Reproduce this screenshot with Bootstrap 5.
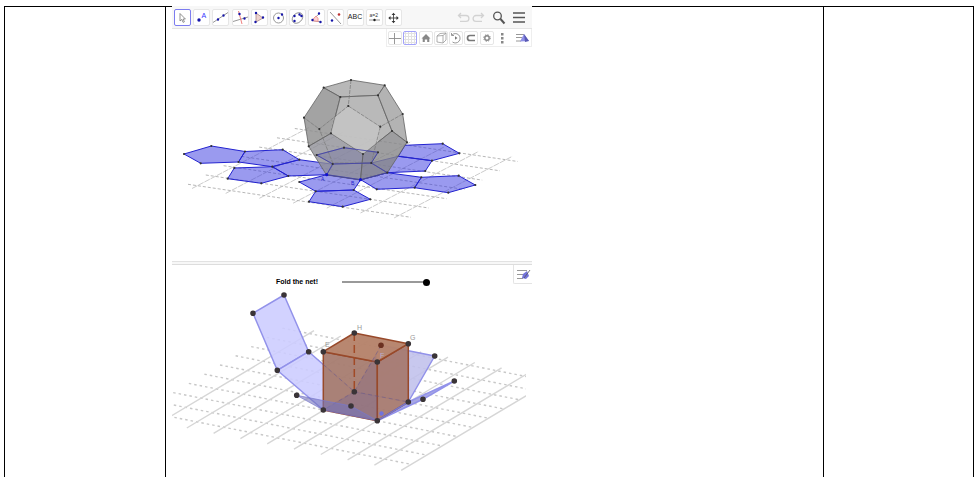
<!DOCTYPE html>
<html lang="en">
<head>
<meta charset="utf-8">
<meta name="viewport" content="width=device-width, initial-scale=1">
<title>Nets of solids</title>
<link href="https://cdn.jsdelivr.net/npm/bootstrap@5.3.0/dist/css/bootstrap.min.css" rel="stylesheet">
<style>
body{font-family:"Liberation Sans",Arial,sans-serif;background:#fff;color:#000}
.sheet{display:grid;grid-template-columns:160fr 658fr 150fr;margin:6px 3px 0 4px;min-height:calc(100vh - 6px);border:1px solid #000;border-width:1px 1px 0}
.sheet-cell{min-width:0}
.sheet-cell + .sheet-cell{border-left:1px solid #000}
.sheet-main{padding:0 6px}
.geo-app{max-width:360px;margin-top:-1px;background:#fff}
.geo-app svg{display:block}
.tool-bar{height:23px;background:#f7f7f7;border-bottom:1px solid #e4e4e4;padding:0 6px 0 2px}
.tool-set{flex:0 1 228px}
.tool-btn,.view-btn,.plain-btn{display:flex;align-items:center;justify-content:center;padding:0;border:1px solid #e6e6e6;border-radius:2px;background:#fff;color:#555}
.tool-btn{width:17px;height:17px}
.tool-btn.active{border-color:#7c7cf0}
.view-btn{width:14px;height:14px}
.view-btn.active{border-color:#a3a3fa}
.plain-btn{border:0;background:transparent}
.word{font-size:7px;line-height:8px;color:#222}
.view-bar{width:146px;height:18px;border:1px solid #eee;border-top:0;padding:0 2px 0 1px}
.splitter{height:4px;background:#f7f7f7;border-top:1px solid #e2e2e2;border-bottom:1px solid #ddd}
.fold-row{height:25px;padding-left:104px}
.fold-row label{font-size:7px;line-height:8px;font-weight:700;margin-top:13px}
.fold-slider{width:91px;height:8px;margin:13px 0 0 21px;appearance:none;-webkit-appearance:none;background:linear-gradient(#999,#999) center/calc(100% - 6px) 2px no-repeat}
.fold-slider::-webkit-slider-thumb{-webkit-appearance:none;width:7px;height:7px;border-radius:50%;background:#000}
.style-btn{width:19px;height:19px;margin-left:auto;border:1px solid #e4e4e4;border-width:0 0 1px 1px;border-radius:0 0 0 2px}
.i{fill:none;stroke:#8c8c8c;stroke-width:.9}
.red-line{fill:none;stroke:#f08080;stroke-width:1}
.d{fill:none;stroke:#1515a8;stroke-width:2.4;stroke-linecap:round}
.caption{font-family:"Liberation Sans",Arial,sans-serif}
</style>
</head>
<body>
<main class="sheet">
<div class="sheet-cell"></div>
<div class="sheet-cell sheet-main">
<div class="geo-app w-100">
  <div class="tool-bar d-flex align-items-center">
    <div class="tool-set d-flex justify-content-between" role="toolbar" aria-label="Tools">
      <button class="tool-btn active" aria-label="Move"><svg width="15" height="15" viewBox="0 0 15 15"><path d="M5 3.500V11l1.800-1.600 1.300 3 1.300-.6-1.300-2.800h2.300z" fill="#fff" stroke="#777" stroke-width=".8"/></svg></button>
      <button class="tool-btn" aria-label="Point"><svg width="15" height="15" viewBox="0 0 15 15"><circle cx="5" cy="10" r="1.700" fill="#1515a8"/><text class="caption" x="7.500" y="8" font-size="7" fill="#33f">A</text></svg></button>
      <button class="tool-btn" aria-label="Line"><svg width="15" height="15" viewBox="0 0 15 15"><path class="i" d="M0 12.500L15 2.500"/><path class="d" d="M5 9.500h0M10.500 5.500h0"/></svg></button>
      <button class="tool-btn" aria-label="Perpendicular line"><svg width="15" height="15" viewBox="0 0 15 15"><path class="i" d="M0 11.500L15 7"/><path class="red-line" d="M5.500 1L9 14"/><path class="d" d="M6.500 4h0M11.500 8.500h0"/></svg></button>
      <button class="tool-btn" aria-label="Polygon"><svg width="15" height="15" viewBox="0 0 15 15"><path d="M4 3l7 5-7 4z" fill="#edd3cf" stroke="#a88" stroke-width=".8"/><path class="d" d="M4 3h0M11 7.500h0M3.500 12h0"/></svg></button>
      <button class="tool-btn" aria-label="Circle"><svg width="15" height="15" viewBox="0 0 15 15"><circle class="i" cx="7.500" cy="8" r="5"/><path class="d" d="M7.500 8h0M11 4.500h0"/></svg></button>
      <button class="tool-btn" aria-label="Conic"><svg width="15" height="15" viewBox="0 0 15 15"><ellipse class="i" cx="7.500" cy="8" rx="6" ry="4.500" transform="rotate(-45 7.500 8)"/><path class="d" d="M4.500 6h0M9.500 4.500h0M11.500 6h0M4.500 11h0"/></svg></button>
      <button class="tool-btn" aria-label="Angle"><svg width="15" height="15" viewBox="0 0 15 15"><path class="i" d="M11 3L3 10.500l9 1.500"/><path d="M3 10.500L7 6q3 2 2 5.500z" fill="#fcd5d5" stroke="#e88" stroke-width=".8"/><path class="d" d="M10 3.500h0M3.500 10h0M11.500 12h0"/></svg></button>
      <button class="tool-btn" aria-label="Reflect"><svg width="15" height="15" viewBox="0 0 15 15"><path class="i" d="M2 2l11 12"/><path class="d" d="M4 10.500h0"/><circle cx="11" cy="4.500" r="1.300" fill="#b33"/></svg></button>
      <button class="tool-btn word" aria-label="Text">ABC</button>
      <button class="tool-btn" aria-label="Slider"><svg width="15" height="15" viewBox="0 0 15 15"><text class="caption" x="2.500" y="6.500" font-size="5" fill="#333">a=2</text><path class="i" d="M2 10h11"/><circle cx="7.500" cy="10" r="1.200" fill="#222"/></svg></button>
      <button class="tool-btn" aria-label="Move view"><svg width="15" height="15" viewBox="0 0 15 15"><path d="M7.500 4v8M3.500 8h8" stroke="#444" stroke-width=".9" fill="none"/><path d="M7.500 2.800l1.900 2.200H5.600zM7.500 13.200l1.900-2.200H5.600zM2.300 8l2.200-1.900v3.800zM12.700 8l-2.200-1.900v3.800z" fill="#333"/></svg></button>
    </div>
    <div class="d-flex align-items-center ms-auto">
      <button class="plain-btn" aria-label="Undo"><svg width="15" height="15" viewBox="0 0 15 15"><path d="M2.500 5.500h7.500a2.900 2.900 0 010 5.800H4M5 3L2.500 5.500 5 8" fill="none" stroke="#d2d2d2" stroke-width="1.300"/></svg></button>
      <button class="plain-btn" aria-label="Redo"><svg width="15" height="15" viewBox="0 0 15 15"><path d="M12.500 5.500H5a2.900 2.900 0 000 5.800h6M10 3l2.500 2.500L10 8" fill="none" stroke="#d2d2d2" stroke-width="1.300"/></svg></button>
      <button class="plain-btn ms-1" aria-label="Search"><svg width="18" height="17" viewBox="0 0 18 17"><circle cx="7.500" cy="7" r="3.800" fill="none" stroke="#555" stroke-width="1.300"/><path d="M10.500 10l4 4.500" stroke="#555" stroke-width="2"/></svg></button>
      <button class="plain-btn ms-1" aria-label="Menu"><svg width="14" height="15" viewBox="0 0 14 15"><path d="M1 3h12M1 7.500h12M1 12h12" stroke="#555" stroke-width="1.400"/></svg></button>
    </div>
  </div>
  <div class="view-bar ms-auto d-flex align-items-center justify-content-between" role="toolbar" aria-label="View">
    <button class="view-btn" aria-label="Axes"><svg width="12" height="12" viewBox="0 0 12 12"><path class="i" d="M5.500 1v11M0 6.500h12"/></svg></button>
    <button class="view-btn active" aria-label="Grid"><svg width="12" height="12" viewBox="0 0 12 12"><path d="M1.500 0v12M4.500 0v12M7.500 0v12M10.500 0v12M0 1.500h12M0 4.500h12M0 7.500h12M0 10.500h12" stroke="#e2e2e2"/></svg></button>
    <button class="view-btn" aria-label="Home"><svg width="12" height="12" viewBox="0 0 12 12"><path d="M6 2l4.500 4.500H9.300V10H7.200V7.500H4.800V10H2.700V6.500H1.500z" fill="#888"/></svg></button>
    <button class="view-btn" aria-label="View direction"><svg width="12" height="12" viewBox="0 0 12 12"><path d="M2 4l6-.5V11l-6-1zM2 4l3-2.500 6-.5-3 2.500M11 1v7l-3 3" fill="none" stroke="#999" stroke-width=".8"/></svg></button>
    <button class="view-btn" aria-label="Rotate"><svg width="12" height="12" viewBox="0 0 12 12"><path class="i" d="M2 3a4.700 4.700 0 11.500 7M1.500 1v2.500H4"/><path d="M5 4.200l2.500 1.800L5 7.800z" fill="#777"/></svg></button>
    <button class="view-btn" aria-label="Snap"><svg width="12" height="12" viewBox="0 0 12 12"><path d="M10 3.500H5a2.500 2.500 0 000 5h5" fill="none" stroke="#777" stroke-width="1.700"/></svg></button>
    <button class="view-btn" aria-label="Settings"><svg width="12" height="12" viewBox="0 0 12 12"><circle cx="6" cy="6" r="2.200" fill="none" stroke="#888" stroke-width="1.400"/><circle cx="6" cy="6" r="3.300" fill="none" stroke="#888" stroke-width="1" stroke-dasharray="1.300 1.300"/></svg></button>
    <button class="plain-btn" aria-label="More"><svg width="14" height="14" viewBox="0 0 14 14"><path d="M6 2h2.500v2.500H6zM6 6h2.500v2.500H6zM6 10h2.500v2.500H6z" fill="#888"/></svg></button>
    <button class="plain-btn ms-1" aria-label="Style"><svg width="15" height="14" viewBox="0 0 15 14"><path class="i" d="M2 3.500h8M2 6.500h6M2 10h5"/><path d="M10 3l5 7-9 .5z" fill="#8f8fe8"/><path d="M10 3l5 7-4 1z" fill="#5a5ab4"/></svg></button>
  </div>
  <svg viewBox="172 47 360 214" width="100%" role="img" aria-label="Dodecahedron and its net">
    <path d="M188 184.300l223 33m-205.200-42.300l223 33m-205.200-42.300l223 33m-205.200-42.300l223 33m-205.200-42.300l223 33m-205.200-42.300l223 33m-205.200-42.300l223 33" fill="none" stroke="#a4a4a4" stroke-width=".8" stroke-dasharray="3 2"/>
    <path d="M192 188.500l118-61.500m-84.300 66.400l118-61.500m-84.300 66.400l118-61.500m-84.300 66.400l118-61.500m-84.300 66.400l118-61.500m-84.300 66.400l118-61.500m-84.300 66.400l118-61.500" fill="none" stroke="#b4b4b4" stroke-width=".7" stroke-dasharray="6 1"/>
    <g fill="#3636e0" fill-opacity=".5" stroke="#2222d0" stroke-width="1" stroke-linejoin="round">
      <path d="M184 154l27.300-8 33.700 5.500-6.500 10.500-37.800 1.300z"/>
      <path d="M245 151.500l37.700-1.800 16.600 10-27 7-33.800-4.700z"/>
      <path d="M272.300 166.700l27-7 34 4.600-6.600 10.400-38.400 1.300z"/>
      <path d="M234.300 168l38-1.300 16 9.300-27 7.300-33.600-4.600z"/>
      <path d="M326.700 174.700l34 5-7 10.300-38 1.300-16.400-9.300z"/>
      <path d="M315.700 191.300l38-1.300 16.600 9.300-27.600 7.400-33.700-5z"/>
      <path d="M360.700 179.700l26.600-7 34 4.600-6.600 10.400-38 1.600z"/>
      <path d="M421.300 177.300l37.400-1.600 16.600 9.300-27 7.700-33.600-5z"/>
      <path d="M387.300 172.700l38-1.700 6.700-10.300-33.700-4.400-27 6.700z"/>
      <path d="M398.300 156.300l33.700 4.400 27.300-7.400-16.600-9.600-37.700 1.600z"/>
      <path d="M316.700 155l27.300-7.300 34 4.600-6.700 10.700-38.600 1z"/>
      <path d="M326.700 174.700l34 5 26.600-7-16-9.700-38.600 1z"/>
    </g>
    <g stroke="#626262" stroke-width=".8" stroke-linejoin="round" fill-opacity=".8">
      <path fill="#a6a6a6" d="M323.700 87.700L351 80l33.700 5.300-6.700 10-37.700 1.700z"/>
      <path fill="#8c8c8c" d="M304 117.700l19.700-30L340.300 97 331 133.300l-22.300 13z"/>
      <path fill="#a8a8a8" d="M340.300 97l37.700-1.700 14 35.700-29 23-32-20.700z"/>
      <path fill="#a0a0a0" d="M384.700 85.300l18 28.700 4.300 28.300L392 131l-14-35.700z"/>
      <path fill="#8f8f96" d="M308.700 146.300l22.300-13L363 154l-2.500 26-34-5z"/>
      <path fill="#868688" d="M407 142.300L392 131l-29 23-2.500 26 27-7.500z"/>
      <path fill="#c6c6c6" stroke="none" d="M348.300 106l32 20.700L378 142l-15 12-32-20.700 4-16z"/>
    </g>
    <path d="M351 80l-2.700 26-29 23-15.300-11.300M348.300 106l32 20.700 22.400-12.700M380.300 126.700l-9 36.300h-38.600l-13.400-34" fill="none" stroke="#777" stroke-width=".7" stroke-dasharray="4 1"/>
    <path d="M316.700 155l27.300-7.300 34 4.600-6.700 10.700-38.600 1zM332.700 164l-6 10.700M371.300 163l16 9.700M326.700 174.700l34 5 26.600-7" fill="none" stroke="#3d3da8" stroke-width=".8"/>
    <path d="M184 154h0M211.300 146h0M245 151.500h0M238.500 162h0M200.700 163.300h0M282.700 149.700h0M299.300 159.700h0M272.300 166.700h0M288.300 176h0M234.300 168h0M261.300 183.300h0M227.700 178.700h0M299.300 182h0M315.700 191.300h0M353.700 190h0M370.300 199.300h0M342.700 206.700h0M309 201.700h0M376.700 189.300h0M414.700 187.700h0M421.300 177.300h0M458.700 175.700h0M475.300 185h0M448.300 192.700h0M387.300 172.700h0M425.300 171h0M432 160.700h0M459.300 153.300h0M442.700 143.700h0M316.700 155h0M344 147.700h0M378 152.300h0M371.300 163h0M332.700 164h0M351 80h0M384.700 85.300h0M402.700 114h0M407 142.300h0M308.700 146.300h0M304 117.700h0M323.700 87.700h0M340.300 97h0M378 95.300h0M392 131h0M363 154h0M331 133.300h0M348.300 106h0M380.300 126.700h0M319.300 129h0" fill="none" stroke="#333" stroke-width="2.200" stroke-linecap="round"/>
    <path d="M326.700 174.700h0M360.500 179.700h0" stroke="#1111d0" stroke-width="3.200" stroke-linecap="round"/>
    <g class="caption" font-size="5" fill="#2222cc"><text x="321" y="181">A</text><text x="351" y="185">B</text></g>
  </svg>
  <div class="splitter"></div>
  <div class="fold-row d-flex align-items-start">
    <label for="fold">Fold the net!</label>
    <input id="fold" class="fold-slider" type="range" min="0" max="100" value="100">
    <button class="plain-btn style-btn" aria-label="Style"><svg width="17" height="17" viewBox="0 0 17 17"><path class="i" d="M2 4.500h10M2 8.500h6M2 12.500h6"/><path d="M12 5l2 5-3 3-4-1 1-4z" fill="#7474dc"/><path d="M15 4l-6 8" stroke="#555" stroke-width=".8"/></svg></button>
  </div>
  <svg viewBox="172 290 360 187" width="100%" role="img" aria-label="Cube and its folding net">
    <clipPath id="plane"><path d="M172 290h354v187H172z"/></clipPath>
    <g clip-path="url(#plane)" fill="none">
      <path stroke="#c8c8c8" stroke-width="1.400" stroke-dasharray="2.500 3" d="M142 411l269.500 53.400m-253.900-62.600l269.500 53.400m-253.900-62.600l269.500 53.400m-253.900-62.600l269.500 53.400m-253.900-62.600l269.500 53.400m-253.900-62.600l269.500 53.400m-253.900-62.600l269.500 53.400m-253.900-62.600l269.500 53.400m-253.900-62.600l269.500 53.400m-253.900-62.600l269.500 53.400"/>
      <path stroke="#d6d6d6" stroke-width="1.400" d="M160 422.700l154-92m-127.200 97.300l154-92m-127.200 97.300l154-92m-127.200 97.300l154-92m-127.200 97.300l154-92m-127.200 97.300l154-92m-127.200 97.300l154-92m-127.200 97.300l154-92m-127.200 97.300l154-92m-127.200 97.300l154-92"/>
    </g>
    <g fill="#ccccff" fill-opacity=".88" stroke="#9292ea" stroke-width="1.500" stroke-linejoin="round">
      <path d="M253 313.300l31-18.300 24.700 56.700-31.400 18.600z"/>
      <path d="M277.300 370.300l31.400-18.600 45.600 40-31 18.300z"/>
      <path fill="#c0c0ec" d="M354.300 391.700l26.700-46.400 53.700 10.700-26.400 46z"/>
      <path fill="#9c9ce0" d="M377.300 420.700l45.700-21.400 31.300-18.300-46 21z"/>
    </g>
    <g stroke="#98492a" stroke-width="1.500" stroke-linejoin="round">
      <path fill="#a77c70" fill-opacity=".95" d="M323.300 351.700l54 10.300v58.700l-54-10.700z"/>
      <path fill="#a77a70" fill-opacity=".95" d="M377.300 362l31-18.300V402l-31 18.700z"/>
      <path fill="#b5826a" fill-opacity=".96" d="M323.300 351.700l31-18.700 54 10.700-31 18.300z"/>
    </g>
    <path d="M323.300 410l31-18.300 23 4.600v24.400z" fill="#6f6098" fill-opacity=".35"/>
    <path d="M354.300 391.700l22-38v42.500z" fill="#6f6098" fill-opacity=".2"/>
    <path d="M354.300 333v58.700" stroke="#a14a26" stroke-width="1.500" stroke-dasharray="8 4"/>
    <path d="M354.300 391.700l-31 18.300M354.300 391.700l54 10.300M323.300 364.500l31 27.200 27-46.400" fill="none" stroke="#62558f" stroke-opacity=".5" stroke-dasharray="4 3"/>
    <path d="M323.300 410l-26.600-14.700L351 406l26.300 14.700z" fill="#7777bd" fill-opacity=".6" stroke="#7777cc" stroke-opacity=".7"/>
    <path d="M377.300 420.700l31-18.700" stroke="#7777cc" stroke-width="1.500"/>
    <path d="M253 313.300h0M284 295h0M308.700 351.700h0M277.300 370.300h0M296.700 395.300h0M323.300 410h0M351 406h0M377.300 420.700h0M423 399.300h0M454.300 381h0M434.700 356h0M408.300 402h0M354.300 391.700h0M323.300 351.700h0M354.300 333h0M408.300 343.700h0M377.300 362h0" fill="none" stroke="#3a3437" stroke-width="5.600" stroke-linecap="round"/>
    <path d="M381 345.300h0" stroke="#6b3020" stroke-width="5.600" stroke-linecap="round"/>
    <path d="M381.500 413.500h0" stroke="#7272dc" stroke-width="4.500" stroke-linecap="round"/>
    <g class="caption" font-size="7" fill="#999"><text x="357" y="330">H</text><text x="410" y="340">G</text><text x="325" y="347">E</text><text x="380" y="358" fill="#b9b0d0">F</text></g>
  </svg>
</div>
</div>
<div class="sheet-cell"></div>
</main>
<script src="https://cdn.jsdelivr.net/npm/bootstrap@5.3.0/dist/js/bootstrap.bundle.min.js"></script>
</body>
</html>
